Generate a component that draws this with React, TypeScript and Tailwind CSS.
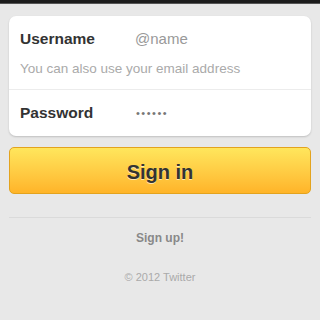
import React from "react";

export default function App() {
  return (
    <div
      className="w-[320px] h-[320px] bg-[#e8e8e8] overflow-hidden flex flex-col"
      style={{ fontFamily: '"Liberation Sans", Arial, sans-serif' }}
    >
      <div className="h-[4px] bg-[#1c1c1c] border-b border-[#555]" />
      <div className="px-[9px] pt-[12px] flex flex-col">
        <div className="bg-white rounded-[7px] shadow-[0_1px_2px_rgba(0,0,0,0.18)] flex flex-col">
          <div className="pt-[14px] pb-[12px] px-[11px] border-b border-[#ececec]">
            <div className="flex items-center h-[18px]">
              <span className="w-[115px] text-[15.5px] font-bold text-[#333]">Username</span>
              <span className="text-[15px] text-[#999]">@name</span>
            </div>
            <div className="mt-[13px] text-[13.5px] text-[#aaa] leading-[16px]">
              You can also use your email address
            </div>
          </div>
          <div className="flex items-center h-[46px] px-[11px]">
            <span className="w-[116px] text-[15.5px] font-bold text-[#333]">Password</span>
            <span className="text-[11px] text-[#777] tracking-[1.5px]">••••••</span>
          </div>
        </div>
        <button
          className="mt-[11px] h-[47px] pt-[3px] rounded-[5px] border border-[#e3a31e] bg-gradient-to-b from-[#ffe65c] to-[#ffb428] text-[20px] font-bold text-[#333] [text-shadow:0_1px_0_rgba(255,255,255,0.6)] flex items-center justify-center"
        >
          Sign in
        </button>
        <div className="mt-[23px] h-[2px] border-t border-[#dadada] border-b-white" />
        <div className="mt-[11px] leading-[16px] text-center text-[12px] font-bold text-[#888]">Sign up!</div>
        <div className="mt-[23px] leading-[16px] text-center text-[11px] text-[#aaa]">© 2012 Twitter</div>
      </div>
    </div>
  );
}
